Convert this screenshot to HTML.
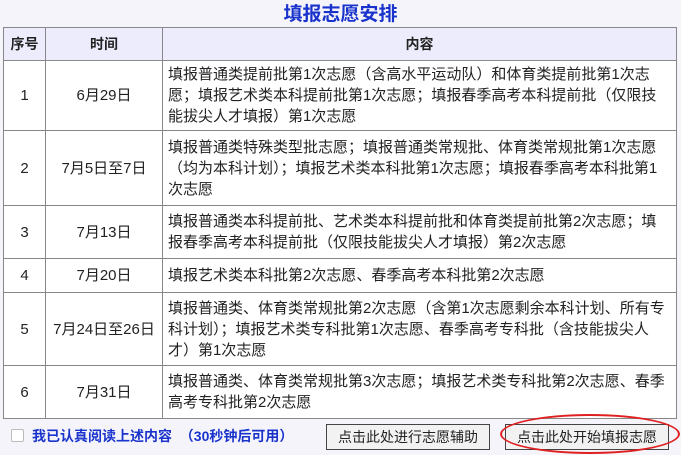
<!DOCTYPE html>
<html><head><meta charset="utf-8"><style>
body{margin:0;width:681px;height:455px;background:#f4f4fa;font-family:"Liberation Sans","Noto Sans CJK SC",sans-serif;font-size:13px;color:#222;position:relative;overflow:hidden}
h1{position:absolute;top:2px;left:0;width:681px;text-align:center;margin:0;font-size:19px;color:#1a33cc;font-weight:bold;line-height:26px}
table{position:absolute;left:3px;top:27px;width:674px;border-collapse:collapse;background:#fff;table-layout:fixed}
td,th{border:1px solid #888;padding:0 5px;line-height:21px;font-size:15px}
th{background:#ececfc;height:32px;font-size:14px}
td.c{text-align:center;padding:0}
.btn{position:absolute;top:424px;height:24px;border:1px solid #444;background:#f2f2f2;font-size:14px;line-height:24px;text-align:center}
</style></head><body>
<h1>填报志愿安排</h1>
<table>
<col style="width:42px"><col style="width:117px"><col>
<tr><th>序号</th><th>时间</th><th>内容</th></tr>
<tr style="height:70px"><td class="c">1</td><td class="c">6月29日</td><td>填报普通类提前批第1次志愿（含高水平运动队）和体育类提前批第1次志愿；填报艺术类本科提前批第1次志愿；填报春季高考本科提前批（仅限技能拔尖人才填报）第1次志愿</td></tr>
<tr style="height:75px"><td class="c">2</td><td class="c">7月5日至7日</td><td>填报普通类特殊类型批志愿；填报普通类常规批、体育类常规批第1次志愿（均为本科计划）；填报艺术类本科批第1次志愿；填报春季高考本科批第1次志愿</td></tr>
<tr style="height:53px"><td class="c">3</td><td class="c">7月13日</td><td>填报普通类本科提前批、艺术类本科提前批和体育类提前批第2次志愿；填报春季高考本科提前批（仅限技能拔尖人才填报）第2次志愿</td></tr>
<tr style="height:34px"><td class="c">4</td><td class="c">7月20日</td><td>填报艺术类本科批第2次志愿、春季高考本科批第2次志愿</td></tr>
<tr style="height:73px"><td class="c">5</td><td class="c">7月24日至26日</td><td>填报普通类、体育类常规批第2次志愿（含第1次志愿剩余本科计划、所有专科计划）；填报艺术类专科批第1次志愿、春季高考专科批（含技能拔尖人才）第1次志愿</td></tr>
<tr style="height:53px"><td class="c">6</td><td class="c">7月31日</td><td>填报普通类、体育类常规批第3次志愿；填报艺术类专科批第2次志愿、春季高考专科批第2次志愿</td></tr>
</table>
<div style="position:absolute;left:11px;top:429px;width:11px;height:11px;border:1px solid #bbb;background:#fff;border-radius:2px"></div>
<div style="position:absolute;left:32px;top:427px;color:#1a33cc;font-weight:bold;font-size:14px;line-height:18px">我已认真阅读上述内容&nbsp;&nbsp;（30秒钟后可用）</div>
<div class="btn" style="left:326px;width:162px">点击此处进行志愿辅助</div>
<div class="btn" style="left:505px;width:162px">点击此处开始填报志愿</div>
<div style="position:absolute;left:500px;top:414px;width:180px;height:40px;border:2px solid #e02020;border-radius:50%;box-sizing:border-box"></div>
</body></html>
